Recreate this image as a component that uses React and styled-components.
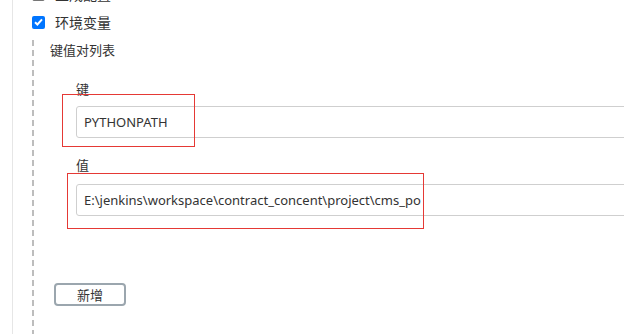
import React from "react";
import styled, { createGlobalStyle } from "styled-components";

const GlobalStyle = createGlobalStyle`
  html, body {
    margin: 0;
    padding: 0;
    background: #fff;
    overflow: hidden;
  }
  body {
    font-family: "Noto Sans", "Noto Sans CJK SC", sans-serif;
    color: #333;
  }
`;

const Panel = styled.div`
  margin-left: 12px;
  border-left: 1px solid #e6e6e6;
  padding-left: 19px;
  height: 334px;
  overflow: hidden;
`;

const CheckList = styled.div`
  display: flex;
  flex-direction: column;
  gap: 14px;
  margin-top: -13px;
`;

const CheckRow = styled.label`
  display: flex;
  align-items: center;
  gap: 10px;
  height: 14px;
  font-size: 14px;
  color: #333;
`;

const Box = styled.span`
  box-sizing: border-box;
  width: 13px;
  height: 13px;
  border-radius: 2px;
  display: flex;
  align-items: center;
  justify-content: center;
  background: ${(p) => (p.checked ? "#0075ff" : "#fff")};
  border: ${(p) => (p.checked ? "none" : "1px solid #767676")};
`;

const Nested = styled.div`
  margin-top: 11px;
  padding: 1px 0 0 18px;
  height: 300px;
  background-image: repeating-linear-gradient(
    to bottom,
    #bdbdbd 0 6px,
    transparent 6px 10px
  );
  background-size: 2px 100%;
  background-repeat: no-repeat;
  background-position: left top;
`;

const SectionTitle = styled.div`
  font-size: 13px;
  line-height: 18px;
  color: #333;
`;

const Entry = styled.div`
  padding: 21px 0 0 26px;
`;

const FieldLabel = styled.div`
  font-size: 13px;
  line-height: 18px;
  color: #333;
  margin-top: ${(p) => p.top || 0}px;
`;

const Field = styled.div`
  position: relative;
  margin-top: ${(p) => p.gap}px;
`;

const Input = styled.div`
  box-sizing: border-box;
  width: 600px;
  height: 32px;
  border: 1px solid #cfcfcf;
  border-radius: 3px;
  padding-left: 7px;
  display: flex;
  align-items: center;
  font-size: 13px;
  color: #333;
  white-space: nowrap;
`;

const Highlight = styled.div`
  position: absolute;
  left: ${(p) => p.x}px;
  top: ${(p) => p.y}px;
  width: ${(p) => p.w}px;
  height: ${(p) => p.h}px;
  border: 1px solid #e53935;
  box-sizing: border-box;
  pointer-events: none;
`;

const AddButton = styled.button`
  box-sizing: border-box;
  margin: 67px 0 0 4px;
  width: 72px;
  height: 23px;
  border: 2px solid #9ba6ae;
  border-radius: 4px;
  background: #fff;
  font-family: "Noto Sans CJK SC", sans-serif;
  font-size: 13px;
  color: #333;
  padding: 0;
`;

const Tick = () => (
  <svg width="9" height="8" viewBox="0 0 9 8">
    <path d="M1 4.2 L3.4 6.5 L8 1.3" stroke="#fff" strokeWidth="2" fill="none" />
  </svg>
);

export default function App() {
  return (
    <>
      <GlobalStyle />
      <Panel>
        <CheckList>
          <CheckRow>
            <Box />
            生成配置
          </CheckRow>
          <CheckRow>
            <Box checked>
              <Tick />
            </Box>
            环境变量
          </CheckRow>
        </CheckList>
        <Nested>
          <SectionTitle>键值对列表</SectionTitle>
          <Entry>
            <FieldLabel>键</FieldLabel>
            <Field gap={8}>
              <Input>PYTHONPATH</Input>
              <Highlight x={-14} y={-12} w={133} h={53} />
            </Field>
            <FieldLabel top={18}>值</FieldLabel>
            <Field gap={10}>
              <Input>E:\jenkins\workspace\contract_concent\project\cms_po</Input>
              <Highlight x={-9} y={-11} w={357} h={56} />
            </Field>
          </Entry>
          <AddButton>新增</AddButton>
        </Nested>
      </Panel>
    </>
  );
}
